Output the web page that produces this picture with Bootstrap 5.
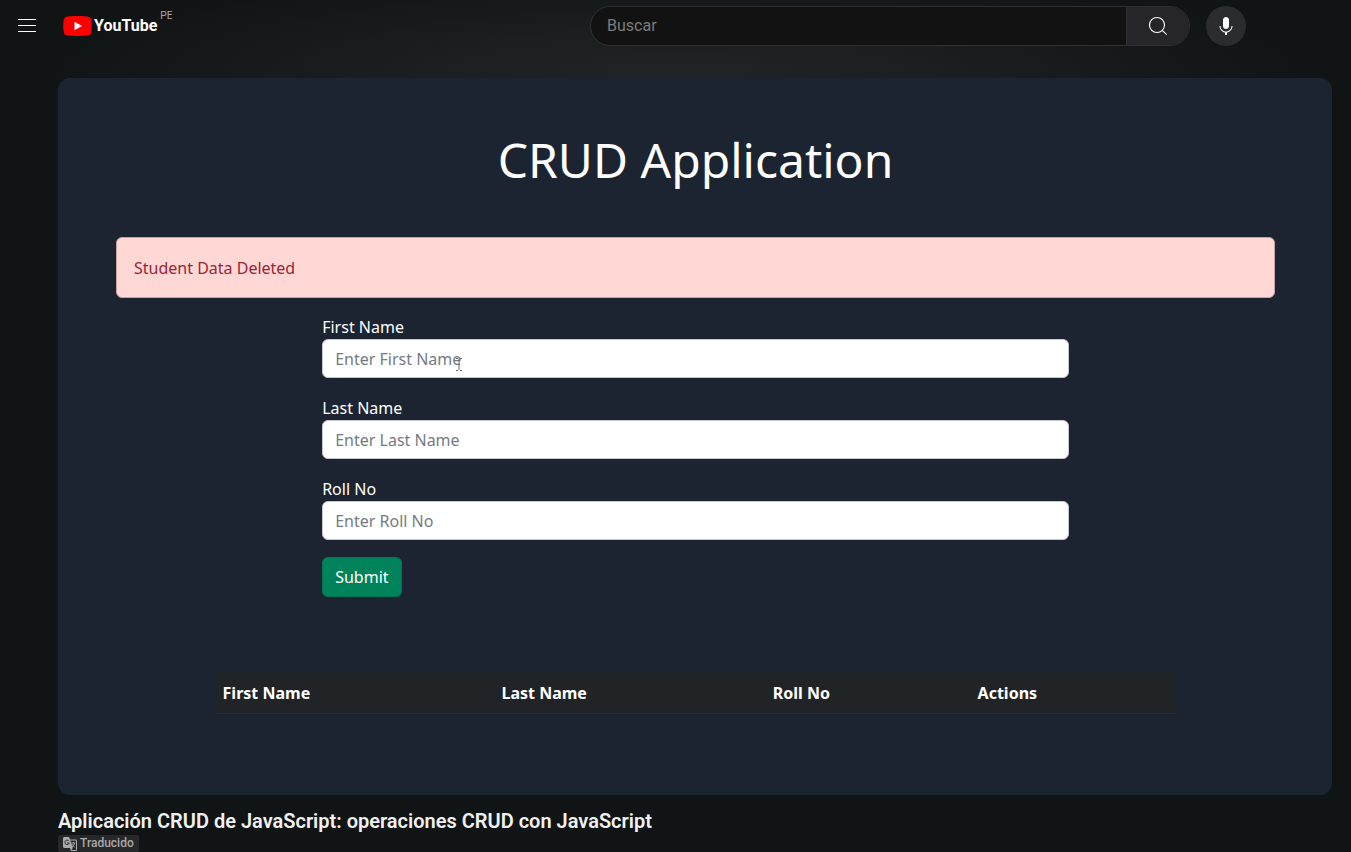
<!DOCTYPE html>
<html lang="es">
<head>
<meta charset="utf-8">
<meta name="viewport" content="width=device-width, initial-scale=1">
<title>Aplicación CRUD de JavaScript - YouTube</title>
<link href="https://cdn.jsdelivr.net/npm/bootstrap@5.3.0/dist/css/bootstrap.min.css" rel="stylesheet">
<style>
  body {
    color: #f1f1f1;
    font-family: Roboto, Arial, sans-serif;
    background: #111415 radial-gradient(ellipse 640px 110px at 50% 76px, #212424 0%, #1b1e1f 45%, #111415 100%) no-repeat;
    min-height: 100vh;
    overflow-x: hidden;
  }
  .masthead { height: 52px; padding: 0 105px 0 16px; }
  .icon-button { background: none; border: 0; padding: 0; color: #fff; line-height: 1; }
  .brand { margin-left: 25px; color: #fff; text-decoration: none; }
  .wordmark { font-size: 16px; font-weight: 700; line-height: 28px; margin-left: 2px; }
  .country { font-size: 10px; line-height: 12px; color: #aaa; margin: -2px 0 0 3px; align-self: flex-start; }
  .search-group { flex: 0 1 656px; gap: 16px; }
  .search-box { height: 40px; border-radius: 20px; border: 1px solid #303030; overflow: hidden; background: #121212; }
  .search-box input { background: transparent; border: 0; color: #fff; font-size: 16px; padding: 0 16px; outline: 0; }
  .search-box input::placeholder { color: #7c7c7c; opacity: 1; }
  .search-box button { width: 63px; background: #262628; border: 0; border-left: 1px solid #303030; }
  .mic { width: 40px; height: 40px; background: #2b2c2e; }
  .watch { margin: 26px 19px 0 58px; }
  .player {
    font-family: "Segoe UI", "Noto Sans", sans-serif;
    background: #1b2430; border-radius: 12px; padding: 48px 57px 81px 58px;
    --bs-gutter-x: 26px;
  }
  .player h1 { font-size: 48px; line-height: 68px; font-weight: 400; color: #fff; margin: 0 0 43px; }
  .player .alert {
    background: #ffd7d5; border-color: #c9a0a5; color: #96253a; font-size: 16px; line-height: 25px;
    padding: 18px 17px 16px; border-radius: 6px; margin-bottom: 16px;
  }
  .form-area { padding: 0 13px; }
  .form-area label { display: block; font-size: 16px; line-height: 23px; padding-top: 2px; color: #fff; }
  .form-area .form-control { height: 39px; font-size: 16px; padding: 6px 12px; border-radius: 6px; border-color: #c4c8d0; background: #fff; }
  .form-area .field { margin-bottom: 17px; }
  .form-area .form-control::placeholder { color: #757b84; }
  .submit { background: #00835a; border: 1px solid #00784f; color: #fff; font-size: 16px; line-height: 24px; padding: 7px 12px; border-radius: 6px; }
  .text-cursor { left: 134px; top: 44px; }
  .students { margin-top: 75px; }
  .students table { --bs-table-bg: #212427; --bs-table-border-color: #292a35; table-layout: fixed; margin: 0; }
  .students th { font-size: 16px; line-height: 23px; padding: 10px 8px 8px; color: #fff; }
  .col-first { width: 29%; } .col-last { width: 28.2%; } .col-roll { width: 21.3%; }
  .video-title { font-size: 20px; line-height: 28px; font-weight: 600; margin: 12px 0 0; }
  .translated { background: #272829; color: #aaa; font-size: 12px; line-height: 17px; font-weight: 500; border-radius: 2px; padding: 0 5px; gap: 3px; }
</style>
</head>
<body>
<header class="masthead d-flex align-items-center justify-content-between">
  <div class="d-flex align-items-center">
    <button class="icon-button" type="button" aria-label="Guía">
      <svg class="d-block" width="22" height="16" viewBox="0 0 22 16" stroke="#fff" stroke-width="1"><path d="M2 1.500h18M2 7.500h18M2 13.500h18"/></svg>
    </button>
    <a class="brand d-flex align-items-center" href="#" aria-label="YouTube">
      <svg width="29" height="20" viewBox="0 0 29 20"><path fill="#f00" d="M3.600.7C6.500 0 14.500 0 14.500 0s8 0 10.900.7c1.600.4 2.300 1.300 2.700 2.600.9 3.600.9 9.800 0 13.400-.4 1.300-1.100 2.200-2.700 2.600-2.900.7-10.900.7-10.900.7s-8 0-10.900-.7C2 18.900 1.300 18 .9 16.700 0 13.100 0 6.900.9 3.300 1.300 2 2 1.100 3.600.7z"/><path fill="#fff" d="M11.500 5.700v8.600l7.500-4.300z"/></svg>
      <span class="wordmark">YouTube</span>
    </a>
    <span class="country">PE</span>
  </div>
  <div class="search-group d-flex">
    <form class="search-box d-flex flex-grow-1">
      <input class="flex-grow-1" type="text" placeholder="Buscar" aria-label="Buscar">
      <button class="d-flex align-items-center justify-content-center" type="button" aria-label="Buscar">
        <svg width="24" height="24" viewBox="0 0 24 24" fill="none" stroke="#fff" stroke-width="1.100"><circle cx="11" cy="11" r="7.500"/><path d="m16.300 16.300 4.400 4.400"/></svg>
      </button>
    </form>
    <button class="icon-button mic rounded-circle d-flex align-items-center justify-content-center" type="button" aria-label="Buscar con la voz">
      <svg width="24" height="24" viewBox="0 0 24 24" fill="#fff"><path d="M12 3c-1.660 0-3 1.370-3 3.070v5.860c0 1.700 1.340 3.070 3 3.070s3-1.370 3-3.070V6.070C15 4.370 13.660 3 12 3z"/><path d="M18.500 12h-1c0 3.030-2.470 5.500-5.500 5.500S6.500 15.030 6.500 12h-1c0 3.240 2.390 5.930 5.500 6.410V21h2v-2.590c3.110-.48 5.500-3.170 5.500-6.410z"/></svg>
    </button>
  </div>
</header>

<main class="watch">
  <section class="player">
    <h1 class="text-center">CRUD Application</h1>
    <div class="alert" role="alert">Student Data Deleted</div>
    <div class="d-flex justify-content-center">
      <form class="form-area col-8">
        <div class="field position-relative">
          <label for="firstName">First Name</label>
          <input class="form-control" id="firstName" type="text" placeholder="Enter First Name">
          <svg class="text-cursor position-absolute" width="6" height="13" viewBox="0 0 6 13" fill="none" stroke="#666"><path d="M0 .5h2M4 .5h2M0 12.500h2M4 12.500h2M3 1v11"/></svg>
        </div>
        <div class="field">
          <label for="lastName">Last Name</label>
          <input class="form-control" id="lastName" type="text" placeholder="Enter Last Name">
        </div>
        <div class="field">
          <label for="rollNo">Roll No</label>
          <input class="form-control" id="rollNo" type="text" placeholder="Enter Roll No">
        </div>
        <button class="submit" type="button">Submit</button>
      </form>
    </div>
    <div class="students row justify-content-center">
      <div class="col-10">
        <table class="table">
          <thead><tr><th class="col-first" scope="col">First Name</th><th class="col-last" scope="col">Last Name</th><th class="col-roll" scope="col">Roll No</th><th scope="col">Actions</th></tr></thead>
        </table>
      </div>
    </div>
  </section>
  <h2 class="video-title">Aplicación CRUD de JavaScript: operaciones CRUD con JavaScript</h2>
  <div class="d-flex">
  <div class="translated d-inline-flex align-items-center">
    <svg width="14" height="14" viewBox="0 0 14 14"><path fill="#aaa" d="M1.500 0H6l1 2.500h5.500c.8 0 1.500.7 1.500 1.500v8.500c0 .8-.7 1.500-1.500 1.500H8l-1-3H1.500C.7 11 0 10.300 0 9.500v-8C0 .7.700 0 1.500 0z"/><path fill="#272829" d="M7.400 3.500h5c.4 0 .6.3.6.6v8.300c0 .4-.2.6-.6.6H8.500l1.300-2z"/><path fill="none" stroke="#272829" d="M6 4.200A2.200 2.200 0 1 0 6.200 6H4.200"/><path fill="none" stroke="#aaa" stroke-width=".9" d="M8.300 6h4M10.300 5v1M11.700 6c-.4 1.800-1.300 3-2.600 4M9 7.200c.7 1.300 1.500 2.200 2.700 3"/></svg>
    <span>Traducido</span>
  </div>
  </div>
</main>
<script src="https://cdn.jsdelivr.net/npm/bootstrap@5.3.0/dist/js/bootstrap.bundle.min.js"></script>
</body>
</html>
